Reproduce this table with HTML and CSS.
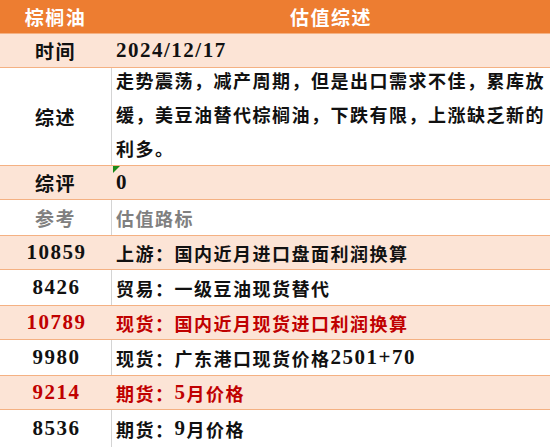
FILE: index.html
```html
<!DOCTYPE html>
<html>
<head>
<meta charset="utf-8">
<link rel="stylesheet" href="styles.css">
</head>
<body>
<div class="table">
  <div class="row head">
    <div class="c1">棕榈油</div>
    <div class="c2 center">估值综述</div>
  </div>
  <div class="row pink">
    <div class="c1">时间</div>
    <div class="c2"><span class="lat">2024/12/17</span></div>
  </div>
  <div class="row tall">
    <div class="c1">综述</div>
    <div class="c2 multi">走势震荡，减产周期，但是出口需求不佳，累库放<br>缓，美豆油替代棕榈油，下跌有限，上涨缺乏新的<br>利多。</div>
  </div>
  <div class="row pink">
    <div class="c1">综评</div>
    <div class="c2 flag"><span class="lat">0</span></div>
  </div>
  <div class="row gray">
    <div class="c1">参考</div>
    <div class="c2">估值路标</div>
  </div>
  <div class="row pink">
    <div class="c1 lat">10859</div>
    <div class="c2">上游：国内近月进口盘面利润换算</div>
  </div>
  <div class="row">
    <div class="c1 lat">8426</div>
    <div class="c2">贸易：一级豆油现货替代</div>
  </div>
  <div class="row pink red">
    <div class="c1 lat">10789</div>
    <div class="c2">现货：国内近月现货进口利润换算</div>
  </div>
  <div class="row">
    <div class="c1 lat">9980</div>
    <div class="c2">现货：广东港口现货价格<span class="lat">2501+70</span></div>
  </div>
  <div class="row pink red">
    <div class="c1 lat">9214</div>
    <div class="c2">期货：<span class="lat">5</span>月价格</div>
  </div>
  <div class="row last">
    <div class="c1 lat">8536</div>
    <div class="c2">期货：<span class="lat">9</span>月价格</div>
  </div>
</div>
</body>
</html>
```

FILE: styles.css
```css
html, body {
  margin: 0;
  padding: 0;
  background: #ffffff;
}
body {
  font-family: "Liberation Serif", "Noto Sans CJK SC", serif;
  font-weight: 700;
  font-size: 18px;
  letter-spacing: 1.5px;
  color: #111111;
  width: 550px;
  height: 447px;
  overflow: hidden;
}
.table {
  display: flex;
  flex-direction: column;
}
.row {
  display: flex;
  height: 35px;
  box-sizing: border-box;
}
.c1 {
  width: 112px;
  flex: none;
  display: flex;
  align-items: center;
  justify-content: center;
  box-sizing: border-box;
  border-right: 1px solid #d4d4d4;
  font-size: 19px;
}
.c2 {
  flex: 1;
  display: flex;
  align-items: center;
  padding-left: 4px;
  font-size: 18px;
  position: relative;
}
.lat {
  font-size: 21px;
}
.c1.lat {
  padding-left: 2px;
}
.head {
  height: 33px;
  background: #ed7d31;
  color: #ffffff;
}
.head .c1, .pink .c1 {
  border-right-color: transparent;
}
.head .c1 {
  font-size: 19px;
}
.head .c2.center {
  justify-content: center;
  padding-left: 0;
  padding-right: 0;
  font-size: 19px;
}
.pink {
  background: #fce4d6;
  border-top: 1px solid #f4b183;
  border-bottom: 1px solid #f4b183;
}
.tall {
  height: 97px;
}
.multi {
  display: block;
  line-height: 34px;
  margin-top: -3px;
  white-space: nowrap;
}
.gray {
  color: #808080;
}
.red {
  color: #c00000;
}
.last {
  height: 37px;
}
.flag::before {
  content: "";
  position: absolute;
  left: 1px;
  top: 0;
  width: 0;
  height: 0;
  border-top: 7px solid #1a8a1a;
  border-right: 7px solid transparent;
}
```
